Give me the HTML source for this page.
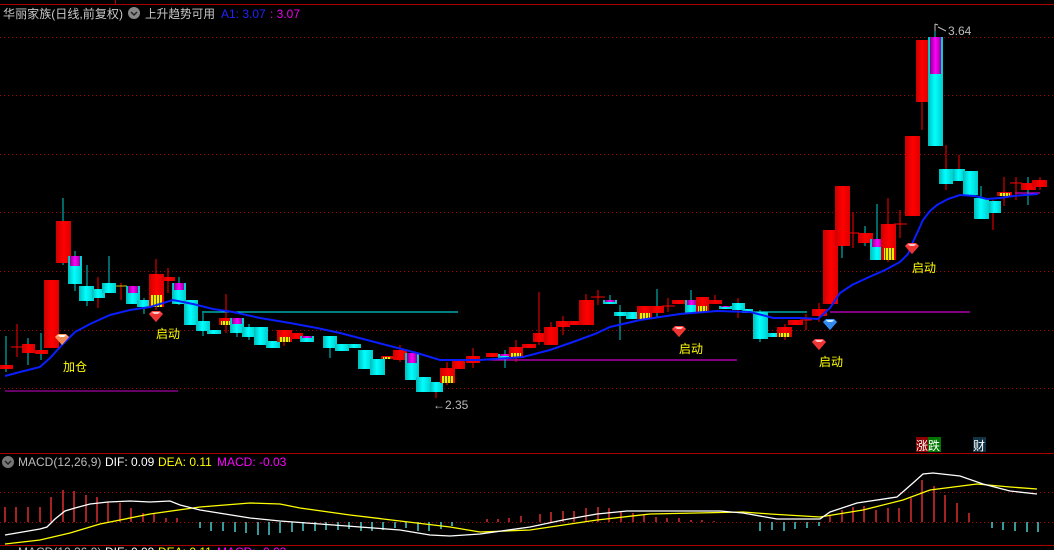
<!DOCTYPE html>
<html><head><meta charset="utf-8"><style>
html,body{margin:0;padding:0;background:#000;}
svg{display:block}
text{font-family:"Liberation Sans","Noto Sans CJK SC",sans-serif;}
.r{fill:url(#gr)}.c{fill:url(#gc)}.m{fill:url(#gm)}.s{fill:url(#ps)}
.wr{stroke:#f00;stroke-width:1}.wc{stroke:#0cc;stroke-width:1}
</style></head><body>
<svg width="1054" height="550" viewBox="0 0 1054 550" xmlns="http://www.w3.org/2000/svg">
<defs>
<linearGradient id="gr" x1="0" x2="1"><stop offset="0" stop-color="#c00"/><stop offset=".5" stop-color="#f00"/><stop offset="1" stop-color="#d00"/></linearGradient>
<linearGradient id="gc" x1="0" x2="1"><stop offset="0" stop-color="#0bb"/><stop offset=".45" stop-color="#0ff"/><stop offset="1" stop-color="#0cc"/></linearGradient>
<linearGradient id="gm" x1="0" x2="1"><stop offset="0" stop-color="#808"/><stop offset=".5" stop-color="#f0f"/><stop offset="1" stop-color="#909"/></linearGradient>
<pattern id="ps" width="3" height="4" patternUnits="userSpaceOnUse"><rect width="3" height="4" fill="#ee0"/><rect width="1" height="4" fill="#750"/></pattern>
<g id="dr"><path d="M-7,-3 L-4,-6 L4,-6 L7,-3 L0,5 Z" fill="#f44"/><path d="M-7,-3 L7,-3 L0,5Z" fill="#e33"/><path d="M-4,-5 L4,-5 L2,-3 L-2,-3Z" fill="#fcc"/></g>
<g id="db"><path d="M-7,-3 L-4,-6 L4,-6 L7,-3 L0,5 Z" fill="#49f"/><path d="M-7,-3 L7,-3 L0,5Z" fill="#38e"/><path d="M-4,-5 L4,-5 L2,-3 L-2,-3Z" fill="#cef"/></g>
<g id="do"><path d="M-7,-3 L-4,-6 L4,-6 L7,-3 L0,5 Z" fill="#f96"/><path d="M-7,-3 L7,-3 L0,5Z" fill="#e85"/><path d="M-4,-5 L4,-5 L2,-3 L-2,-3Z" fill="#fff"/></g>
</defs>
<rect width="1054" height="550" fill="#000"/>
<line x1="0" y1="4.5" x2="1054" y2="4.5" stroke="#a00"/>
<line x1="115.5" y1="0" x2="115.5" y2="4" stroke="#a00"/>
<line x1="0" y1="453.5" x2="1054" y2="453.5" stroke="#a00"/>
<line x1="0" y1="545.5" x2="1054" y2="545.5" stroke="#a00"/>
<g stroke="#a00" stroke-dasharray="1,3">
<line x1="0" y1="37.5" x2="1054" y2="37.5"/><line x1="0" y1="95.5" x2="1054" y2="95.5"/>
<line x1="0" y1="154.5" x2="1054" y2="154.5"/><line x1="0" y1="212.5" x2="1054" y2="212.5"/>
<line x1="0" y1="271.5" x2="1054" y2="271.5"/><line x1="0" y1="330.5" x2="1054" y2="330.5"/>
<line x1="0" y1="388.5" x2="1054" y2="388.5"/>
<line x1="0" y1="492.5" x2="1054" y2="492.5"/><line x1="0" y1="522.5" x2="1054" y2="522.5"/>
</g>
<text x="3" y="18" font-size="12" fill="#c8c8c8" textLength="120" lengthAdjust="spacingAndGlyphs">华丽家族(日线,前复权)</text>
<circle cx="134" cy="13" r="6" fill="#888"/><path d="M131,12 L134,15 L137,12" stroke="#222" stroke-width="1.5" fill="none"/>
<text x="145" y="18" font-size="12" fill="#c8c8c8" textLength="70" lengthAdjust="spacingAndGlyphs">上升趋势可用</text>
<text x="221" y="18" font-size="12" fill="#22f">A1: 3.07</text>
<text x="270" y="18" font-size="12" fill="#e0e">: 3.07</text>
<line x1="5" y1="391" x2="178" y2="391" stroke="#c0c" stroke-width="1"/>
<line x1="202" y1="312" x2="458" y2="312" stroke="#0ff" stroke-width="1"/>
<line x1="480" y1="360" x2="737" y2="360" stroke="#f0f" stroke-width="1"/>
<line x1="753" y1="312" x2="807" y2="312" stroke="#0ff" stroke-width="1"/>
<line x1="830" y1="312" x2="970" y2="312" stroke="#f0f" stroke-width="1"/>
<line x1="1015" y1="193" x2="1040" y2="193" stroke="#f0f" stroke-width="1"/>
<g>
<line class="wc" x1="6" y1="336" x2="6" y2="372"/><line class="wr" x1="17" y1="324" x2="17" y2="357"/><line class="wr" x1="11" y1="347" x2="23" y2="347"/>
<line class="wc" x1="28" y1="338" x2="28" y2="365"/><line class="wc" x1="41" y1="333" x2="41" y2="360"/>
<line class="wc" x1="63" y1="198" x2="63" y2="265"/><line class="wc" x1="75" y1="251" x2="75" y2="291"/>
<line class="wc" x1="87" y1="265" x2="87" y2="306"/><line class="wr" x1="98" y1="277" x2="98" y2="308"/>
<line class="wc" x1="109" y1="256" x2="109" y2="293"/><line class="wr" x1="121" y1="283" x2="121" y2="300"/><line x1="116" y1="286" x2="127" y2="286" stroke="#cc0"/>
<line class="wc" x1="144" y1="298" x2="144" y2="314"/><line class="wr" x1="156" y1="259" x2="156" y2="310"/>
<line class="wr" x1="168" y1="268" x2="168" y2="293"/><line class="wc" x1="179" y1="277" x2="179" y2="305"/>
<line class="wc" x1="203" y1="313" x2="203" y2="336"/><line class="wr" x1="226" y1="294" x2="226" y2="333"/>
<line class="wc" x1="237" y1="318" x2="237" y2="337"/><line class="wc" x1="249" y1="324" x2="249" y2="340"/>
<line class="wr" x1="284" y1="330" x2="284" y2="346"/><line class="wc" x1="330" y1="348" x2="330" y2="358"/>
<line class="wr" x1="400" y1="345" x2="400" y2="362"/><line class="wr" x1="436" y1="382" x2="436" y2="398"/>
<line class="wr" x1="447" y1="362" x2="447" y2="385"/><line class="wr" x1="473" y1="348" x2="473" y2="368"/>
<line class="wc" x1="505" y1="350" x2="505" y2="368"/><line class="wr" x1="516" y1="340" x2="516" y2="362"/>
<line class="wr" x1="539" y1="292" x2="539" y2="345"/><line class="wr" x1="551" y1="322" x2="551" y2="345"/>
<line class="wr" x1="563" y1="316" x2="563" y2="335"/><line class="wr" x1="586" y1="294" x2="586" y2="325"/>
<line class="wr" x1="598" y1="290" x2="598" y2="305"/><line class="wr" x1="591" y1="297" x2="605" y2="297"/>
<line class="wc" x1="610" y1="295" x2="610" y2="304"/><line class="wc" x1="620" y1="305" x2="620" y2="340"/>
<line class="wc" x1="657" y1="289" x2="657" y2="317"/><line class="wr" x1="668" y1="298" x2="668" y2="312"/><line class="wr" x1="662" y1="306" x2="675" y2="306"/>
<line class="wc" x1="691" y1="290" x2="691" y2="313"/><line class="wr" x1="715" y1="295" x2="715" y2="304"/>
<line class="wr" x1="738" y1="298" x2="738" y2="318"/><line class="wc" x1="760" y1="310" x2="760" y2="342"/>
<line class="wr" x1="785" y1="324" x2="785" y2="340"/><line class="wr" x1="806" y1="314" x2="806" y2="330"/><line class="wr" x1="800" y1="320" x2="812" y2="320"/>
<line class="wr" x1="819" y1="303" x2="819" y2="322"/>
<line class="wc" x1="842" y1="246" x2="842" y2="258"/><line class="wr" x1="853" y1="212" x2="853" y2="248"/><line class="wr" x1="847" y1="233" x2="859" y2="233"/>
<line class="wc" x1="865" y1="226" x2="865" y2="246"/><line class="wc" x1="877" y1="204" x2="877" y2="260"/>
<line class="wr" x1="888" y1="198" x2="888" y2="262"/><line class="wr" x1="900" y1="210" x2="900" y2="238"/><line class="wr" x1="894" y1="224" x2="907" y2="224"/>
<line class="wr" x1="922" y1="40" x2="922" y2="130"/><line class="wc" x1="935" y1="28" x2="935" y2="37"/>
<line class="wr" x1="946" y1="145" x2="946" y2="190"/><line class="wr" x1="959" y1="155" x2="959" y2="181"/>
<line class="wc" x1="981" y1="186" x2="981" y2="210"/><line class="wr" x1="993" y1="200" x2="993" y2="230"/>
<line class="wr" x1="1004" y1="177" x2="1004" y2="206"/><line class="wr" x1="1016" y1="177" x2="1016" y2="200"/><line class="wr" x1="1010" y1="183" x2="1022" y2="183"/>
<line class="wc" x1="1028" y1="177" x2="1028" y2="205"/><line class="wr" x1="1040" y1="177" x2="1040" y2="190"/>
</g>
<g>
<rect class="r" x="0" y="365" width="13" height="4"/>
<rect class="r" x="22" y="344" width="13" height="9"/>
<rect class="r" x="35" y="350" width="13" height="4"/>
<rect class="r" x="44" y="280" width="15" height="68"/>
<rect class="r" x="56" y="221" width="15" height="42"/>
<rect class="c" x="68" y="256" width="14" height="28"/><rect class="m" x="70" y="256" width="10" height="10"/>
<rect class="c" x="79" y="286" width="15" height="15"/>
<rect class="c" x="92" y="289" width="13" height="9"/>
<rect class="c" x="102" y="283" width="14" height="10"/>
<rect class="c" x="126" y="286" width="14" height="18"/><rect class="m" x="128" y="286" width="10" height="7"/>
<rect class="c" x="137" y="300" width="14" height="7"/>
<rect class="r" x="149" y="274" width="15" height="33"/><rect class="s" x="151" y="295" width="11" height="12"/>
<rect class="r" x="162" y="277" width="13" height="4"/>
<rect class="c" x="172" y="283" width="14" height="21"/><rect class="m" x="174" y="283" width="10" height="7"/>
<rect class="c" x="184" y="300" width="14" height="25"/>
<rect class="c" x="196" y="321" width="14" height="10"/>
<rect class="c" x="207" y="330" width="14" height="4"/>
<rect class="r" x="219" y="318" width="14" height="7"/><rect class="s" x="221" y="321" width="10" height="4"/>
<rect class="c" x="230" y="318" width="14" height="15"/><rect class="m" x="232" y="318" width="10" height="6"/>
<rect class="c" x="242" y="327" width="14" height="10"/>
<rect class="c" x="254" y="327" width="14" height="18"/>
<rect class="c" x="266" y="341" width="14" height="7"/>
<rect class="r" x="277" y="330" width="15" height="12"/><rect class="s" x="279" y="337" width="11" height="5"/>
<rect class="r" x="290" y="333" width="13" height="6"/>
<rect class="c" x="300" y="336" width="14" height="6"/><rect class="m" x="302" y="336" width="10" height="2"/>
<rect class="c" x="323" y="336" width="14" height="12"/>
<rect class="c" x="335" y="344" width="14" height="7"/>
<rect class="c" x="348" y="344" width="13" height="4"/>
<rect class="c" x="358" y="350" width="15" height="19"/>
<rect class="c" x="370" y="359" width="15" height="16"/>
<rect class="r" x="381" y="356" width="12" height="3"/><rect class="s" x="383" y="357" width="8" height="2"/>
<rect class="r" x="393" y="350" width="14" height="10"/>
<rect class="c" x="405" y="353" width="14" height="27"/><rect class="m" x="407" y="353" width="10" height="10"/>
<rect class="c" x="416" y="377" width="15" height="15"/>
<rect class="c" x="430" y="382" width="13" height="10"/>
<rect class="r" x="440" y="368" width="15" height="15"/><rect class="s" x="442" y="376" width="11" height="7"/>
<rect class="r" x="452" y="360" width="13" height="9"/>
<rect class="r" x="466" y="356" width="14" height="7"/>
<rect class="r" x="486" y="353" width="12" height="4"/>
<rect class="c" x="498" y="354" width="14" height="4"/><rect class="m" x="500" y="354" width="10" height="2"/>
<rect class="r" x="509" y="347" width="14" height="10"/><rect class="s" x="511" y="353" width="10" height="4"/>
<rect class="r" x="522" y="344" width="14" height="4"/>
<rect class="r" x="533" y="333" width="13" height="9"/>
<rect class="r" x="544" y="327" width="14" height="18"/>
<rect class="r" x="556" y="321" width="14" height="6"/>
<rect class="r" x="568" y="321" width="12" height="4"/>
<rect class="r" x="579" y="300" width="15" height="25"/>
<rect class="c" x="603" y="300" width="14" height="4"/><rect class="m" x="605" y="300" width="10" height="2"/>
<rect class="c" x="614" y="312" width="13" height="4"/>
<rect class="c" x="626" y="312" width="14" height="7"/>
<rect class="r" x="637" y="306" width="15" height="13"/><rect class="s" x="639" y="313" width="11" height="6"/>
<rect class="r" x="650" y="306" width="14" height="7"/>
<rect class="r" x="672" y="300" width="13" height="4"/>
<rect class="c" x="685" y="300" width="13" height="13"/><rect class="m" x="687" y="300" width="9" height="5"/>
<rect class="r" x="696" y="297" width="13" height="15"/><rect class="s" x="698" y="306" width="9" height="6"/>
<rect class="r" x="709" y="300" width="13" height="4"/>
<rect class="c" x="719" y="306" width="13" height="3"/><rect class="m" x="721" y="306" width="9" height="1"/>
<rect class="c" x="732" y="303" width="13" height="7"/>
<rect class="c" x="742" y="309" width="11" height="4"/>
<rect class="c" x="753" y="312" width="15" height="27"/>
<rect class="c" x="768" y="333" width="12" height="4"/>
<rect class="r" x="777" y="327" width="15" height="10"/><rect class="s" x="779" y="333" width="11" height="4"/>
<rect class="r" x="788" y="320" width="15" height="5"/>
<rect class="r" x="812" y="309" width="15" height="7"/>
<rect class="r" x="823" y="230" width="15" height="74"/>
<rect class="r" x="835" y="186" width="15" height="60"/>
<rect class="r" x="858" y="233" width="15" height="10"/>
<rect class="c" x="870" y="239" width="15" height="21"/><rect class="m" x="872" y="239" width="11" height="8"/>
<rect class="r" x="881" y="224" width="15" height="36"/><rect class="s" x="884" y="248" width="10" height="12"/>
<rect class="r" x="905" y="136" width="15" height="80"/>
<rect class="r" x="916" y="40" width="12" height="62"/>
<rect class="c" x="928" y="37" width="15" height="109"/><rect class="m" x="930" y="37" width="11" height="37"/>
<rect class="c" x="939" y="169" width="14" height="15"/>
<rect class="c" x="953" y="169" width="12" height="12"/>
<rect class="c" x="963" y="171" width="15" height="24"/>
<rect class="c" x="974" y="198" width="15" height="21"/>
<rect class="c" x="989" y="201" width="12" height="12"/>
<rect class="r" x="997" y="192" width="15" height="4"/><rect class="s" x="999" y="193" width="11" height="3"/>
<rect class="r" x="1021" y="183" width="15" height="7"/>
<rect class="r" x="1032" y="180" width="15" height="7"/>
</g>
<polyline fill="none" stroke="#0a1eff" stroke-width="2" points="5,376 20,372 40,367 50,358 62,345 75,332 90,324 110,315 130,310 150,307 173,300 193,304 213,309 233,312 260,318 290,323 317,328 340,333 367,340 390,346 417,353 440,360 480,360 523,357 550,350 573,342 595,334 610,327 640,320 680,314 717,311 750,312 762,315 773,318 800,318 818,319 830,308 840,293 852,285 867,278 885,270 900,262 908,254 913,242 918,231 923,220 930,211 937,205 948,199 960,195 975,196 987,199 1000,198 1013,196 1038,194"/>
<use href="#do" x="62" y="340"/>
<use href="#dr" x="156" y="317"/>
<use href="#dr" x="679" y="332"/>
<use href="#db" x="830" y="325"/>
<use href="#dr" x="819" y="345"/>
<use href="#dr" x="912" y="249"/>
<g font-size="12" fill="#ff0">
<text x="63" y="371">加仓</text>
<text x="156" y="338">启动</text>
<text x="679" y="353">启动</text>
<text x="819" y="366">启动</text>
<text x="912" y="272">启动</text>
</g>
<text x="433" y="409" font-size="12" fill="#bbb">←2.35</text>
<path d="M935,24 L935,31 M935,24 L938,25 M938,27 L946,31" stroke="#bbb" fill="none"/>
<text x="948" y="35" font-size="12" fill="#bbb">3.64</text>
<rect x="916" y="437" width="12" height="15" fill="#800"/><text x="916" y="450" font-size="12" fill="#fff">涨</text>
<rect x="928" y="437" width="13" height="15" fill="#070"/><text x="928" y="450" font-size="12" fill="#fff">跌</text>
<rect x="973" y="437" width="13" height="15" fill="#134"/><text x="973" y="450" font-size="12" fill="#fff">财</text>
<circle cx="8" cy="462" r="6" fill="#777"/><path d="M5,461 L8,464 L11,461" stroke="#222" stroke-width="1.5" fill="none"/>
<text x="18" y="466" font-size="12" fill="#bbb">MACD(12,26,9)</text>
<text x="105" y="466" font-size="12" fill="#fff">DIF: 0.09</text>
<text x="158" y="466" font-size="12" fill="#ff0">DEA: 0.11</text>
<text x="217" y="466" font-size="12" fill="#f0f">MACD: -0.03</text>
<g stroke="#f33" stroke-width="1.3">
<line x1="5" y1="507" x2="5" y2="522"/><line x1="16" y1="507" x2="16" y2="522"/><line x1="28" y1="507" x2="28" y2="522"/><line x1="40" y1="507" x2="40" y2="522"/>
<line x1="51" y1="497" x2="51" y2="522"/><line x1="63" y1="490" x2="63" y2="522"/><line x1="74" y1="491" x2="74" y2="522"/><line x1="86" y1="495" x2="86" y2="522"/>
<line x1="97" y1="497" x2="97" y2="522"/><line x1="108" y1="502" x2="108" y2="522"/><line x1="120" y1="503" x2="120" y2="522"/><line x1="131" y1="508" x2="131" y2="522"/>
<line x1="143" y1="513" x2="143" y2="522"/><line x1="154" y1="513" x2="154" y2="522"/><line x1="166" y1="518" x2="166" y2="522"/><line x1="177" y1="518" x2="177" y2="522"/>
<line x1="487" y1="519" x2="487" y2="522"/><line x1="498" y1="519" x2="498" y2="522"/><line x1="509" y1="518" x2="509" y2="522"/><line x1="521" y1="516" x2="521" y2="522"/>
<line x1="540" y1="514" x2="540" y2="522"/><line x1="551" y1="512" x2="551" y2="522"/><line x1="563" y1="511" x2="563" y2="522"/><line x1="574" y1="511" x2="574" y2="522"/>
<line x1="586" y1="508" x2="586" y2="522"/><line x1="598" y1="507" x2="598" y2="522"/><line x1="609" y1="508" x2="609" y2="522"/><line x1="621" y1="511" x2="621" y2="522"/>
<line x1="633" y1="513" x2="633" y2="522"/><line x1="644" y1="515" x2="644" y2="522"/><line x1="656" y1="517" x2="656" y2="522"/><line x1="667" y1="518" x2="667" y2="522"/>
<line x1="679" y1="518" x2="679" y2="522"/><line x1="691" y1="520" x2="691" y2="522"/><line x1="702" y1="520" x2="702" y2="522"/><line x1="714" y1="521" x2="714" y2="522"/>
<line x1="830" y1="515" x2="830" y2="522"/><line x1="842" y1="510" x2="842" y2="522"/><line x1="853" y1="507" x2="853" y2="522"/><line x1="864" y1="506" x2="864" y2="522"/>
<line x1="876" y1="510" x2="876" y2="522"/><line x1="888" y1="508" x2="888" y2="522"/><line x1="899" y1="508" x2="899" y2="522"/><line x1="911" y1="498" x2="911" y2="522"/>
<line x1="922" y1="480" x2="922" y2="522"/><line x1="934" y1="486" x2="934" y2="522"/><line x1="945" y1="495" x2="945" y2="522"/><line x1="957" y1="503" x2="957" y2="522"/>
<line x1="969" y1="513" x2="969" y2="522"/>
</g>
<g stroke="#5ee" stroke-width="1.3">
<line x1="200" y1="522" x2="200" y2="528"/><line x1="211" y1="522" x2="211" y2="531"/><line x1="223" y1="522" x2="223" y2="531"/><line x1="235" y1="522" x2="235" y2="532"/>
<line x1="246" y1="522" x2="246" y2="533"/><line x1="258" y1="522" x2="258" y2="535"/><line x1="269" y1="522" x2="269" y2="535"/><line x1="280" y1="522" x2="280" y2="533"/>
<line x1="292" y1="522" x2="292" y2="532"/><line x1="303" y1="522" x2="303" y2="531"/><line x1="315" y1="522" x2="315" y2="531"/><line x1="326" y1="522" x2="326" y2="530"/>
<line x1="338" y1="522" x2="338" y2="530"/><line x1="349" y1="522" x2="349" y2="529"/><line x1="361" y1="522" x2="361" y2="531"/><line x1="372" y1="522" x2="372" y2="531"/>
<line x1="383" y1="522" x2="383" y2="530"/><line x1="395" y1="522" x2="395" y2="528"/><line x1="406" y1="522" x2="406" y2="528"/><line x1="418" y1="522" x2="418" y2="531"/>
<line x1="429" y1="522" x2="429" y2="531"/><line x1="441" y1="522" x2="441" y2="529"/><line x1="452" y1="522" x2="452" y2="526"/>
<line x1="760" y1="522" x2="760" y2="531"/><line x1="772" y1="522" x2="772" y2="530"/><line x1="784" y1="522" x2="784" y2="531"/><line x1="795" y1="522" x2="795" y2="529"/>
<line x1="807" y1="522" x2="807" y2="528"/><line x1="819" y1="522" x2="819" y2="526"/>
<line x1="992" y1="522" x2="992" y2="528"/><line x1="1003" y1="522" x2="1003" y2="530"/><line x1="1015" y1="522" x2="1015" y2="531"/><line x1="1027" y1="522" x2="1027" y2="532"/><line x1="1038" y1="522" x2="1038" y2="532"/>
</g>
<polyline fill="none" stroke="#ff0" stroke-width="1.3" points="5,544 40,540 70,533 100,524 150,514 200,507 250,503 280,504 300,508 350,515 400,521 450,527 480,532 530,530 597,520 650,514 743,512 770,514 820,517 863,510 903,500 930,490 977,484 1010,487 1037,489"/>
<polyline fill="none" stroke="#fff" stroke-width="1.3" points="5,535 40,529 47,527 55,519 65,511 75,508 90,504 108,502 130,501 150,502 170,501 180,505 200,510 250,518 280,521 320,524 360,527 400,530 430,535 450,536 480,534 530,527 563,520 597,514 627,511 720,511 743,513 777,519 820,519 830,512 857,503 897,497 913,483 923,474 933,473 960,476 983,484 1010,491 1037,494"/>
<text x="18" y="556" font-size="12" fill="#bbb">MACD(12,26,9)</text>
<text x="105" y="556" font-size="12" fill="#fff">DIF: 0.09</text>
<text x="158" y="556" font-size="12" fill="#ff0">DEA: 0.11</text>
<text x="217" y="556" font-size="12" fill="#f0f">MACD: -0.03</text>
</svg>
</body></html>
